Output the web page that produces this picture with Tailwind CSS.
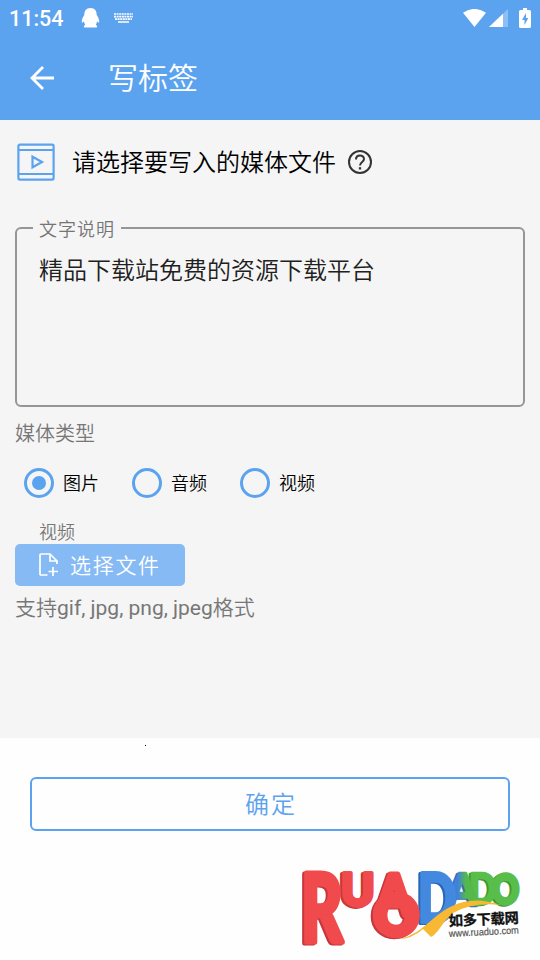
<!DOCTYPE html>
<html lang="zh-CN">
<head>
<meta charset="utf-8">
<meta name="viewport" content="width=device-width, initial-scale=1">
<title>写标签</title>
<script src="https://cdn.jsdelivr.net/npm/@tailwindcss/browser@4"></script>
</head>
<body class="bg-white font-[Roboto,'Noto_Sans_CJK_SC',sans-serif]">
<div class="flex h-[960px] w-[540px] flex-col overflow-hidden bg-[#fefefe]">
  <header class="flex h-[120px] shrink-0 flex-col bg-[#5ca3ef] text-white">
    <div class="flex h-9 items-center pl-[9px] pr-[9px]">
      <span class="w-[54px] text-[21.5px] font-medium leading-9 pt-[2px] whitespace-nowrap">11:54</span>
      <svg class="ml-[18px] h-5 w-[19px]" viewBox="0 0 19 20" fill="currentColor"><path d="M9.500 0C5 0 3.300 3 3.300 7C2 9 .6 11.500 .8 14.200C1 15 2 14.600 3 13.200C3.300 15 3.600 16 4.300 16.800C2.600 17.500 2.500 19 3.500 19.500H15.500C16.500 19 16.400 17.500 14.700 16.800C15.400 16 15.700 15 16 13.200C17 14.600 18 15 18.200 14.200C18.400 11.500 17 9 15.700 7C15.700 3 14 0 9.500 0Z"/></svg>
      <svg class="ml-[14px] h-[11px] w-[19px]" viewBox="0 0 19 11" fill="none" stroke="currentColor"><path d="M0 1H19M0 3.600H19M1 6.200H18" stroke-width="1.700" stroke-dasharray="2 .6"/><path d="M4 9H15" stroke-width="1.500"/></svg>
      <div class="ml-auto flex items-center">
        <svg class="h-[18px] w-[23px]" viewBox="0 0 23 18" fill="currentColor"><path d="M0 3.800Q11.500-4 23 3.800L11.500 18Z"/></svg>
        <svg class="ml-[3px] h-[18px] w-[19px]" viewBox="0 0 19 18" fill="currentColor"><path d="M0 18L19 0V18Z" opacity=".3"/><path d="M0 18L14 4.700V18Z"/></svg>
        <svg class="ml-[11px] h-5 w-3" viewBox="0 0 12 20"><path d="M4 0H8V2H10.500Q12 2 12 3.500V18.500Q12 20 10.500 20H1.500Q0 20 0 18.500V3.500Q0 2 1.500 2H4Z" fill="currentColor"/><path d="M7 5L3 12H5.500V17L9.300 10H7Z" fill="#5ca3ef"/></svg>
      </div>
    </div>
    <div class="flex h-[84px] items-center pl-[30px]">
      <svg class="h-6 w-6" viewBox="0 0 24 24" fill="none" stroke="currentColor" stroke-width="2.800"><path d="M24 12H2M13 1L2 12L13 23"/></svg>
      <h1 class="ml-[54px] pt-[2px] text-[30px] font-[350] leading-[44px]">写标签</h1>
    </div>
  </header>

  <main class="flex h-[618px] shrink-0 flex-col bg-[#f5f5f5] px-[15px] font-[350]">
    <div class="flex h-[84px] items-center pl-[2px]">
      <svg class="h-[38px] w-[38px]" viewBox="0 0 38 38" fill="none" stroke="#5ca3ef" stroke-width="2.200"><rect x="1.400" y="1.600" width="35.200" height="35" rx="1.500"/><path d="M2 7H36M2 31H36M15.500 13.700V24.300L25 19Z"/></svg>
      <h2 class="ml-[17px] pt-[2px] text-[24px] font-[350] leading-9 text-black">请选择要写入的媒体文件</h2>
      <svg class="ml-3 h-6 w-6" viewBox="0 0 24 24" fill="none" stroke="#333"><circle cx="12" cy="12" r="11" stroke-width="2"/><path d="M8 9.500C8 4.300 16 4.400 16 9C16 12 12 12 12 15.500" stroke-width="2"/><path d="M12 17.200V19.500" stroke-width="2.300"/></svg>
    </div>
    <fieldset class="mt-[9px] h-[194px] rounded-[6px] border-2 border-[#969696] px-4">
      <legend class="ml-0 h-[30px] px-[6px] pt-px text-[18px] leading-[31px] tracking-[1px] text-[#757575]">文字说明</legend>
      <p class="ml-[6px] mt-[10px] text-[24px] leading-9 text-[#202020]">精品下载站免费的资源下载平台</p>
    </fieldset>
    <p class="mt-3 text-[20px] leading-[30px] text-[#777]">媒体类型</p>
    <div class="mt-[19px] flex h-[30px] items-center pl-[9px] text-[18px] leading-[30px] text-black">
      <label class="flex w-[108px] items-center gap-[9px]"><span class="flex size-[30px] items-center justify-center rounded-full border-3 border-[#5ca3ef]"><span class="size-[14px] rounded-full bg-[#5ca3ef]"></span></span><span class="pt-[2px] leading-7">图片</span></label>
      <label class="flex w-[108px] items-center gap-[9px]"><span class="size-[30px] rounded-full border-3 border-[#5ca3ef]"></span><span class="pt-[2px] leading-7">音频</span></label>
      <label class="flex w-[108px] items-center gap-[9px]"><span class="size-[30px] rounded-full border-3 border-[#5ca3ef]"></span><span class="pt-[2px] leading-7">视频</span></label>
    </div>
    <p class="mt-[20px] ml-6 h-[26px] text-[18px] leading-[30px] text-[#777]">视频</p>
    <button class="flex h-[42px] w-[170px] items-center rounded-[5px] bg-[#86baf4] pl-6 text-[21px] leading-[40px] tracking-[1.700px] text-white">
      <svg class="h-6 w-5" viewBox="0 0 20 24" fill="none" stroke="currentColor" stroke-width="1.700"><path d="M8.500 22H2Q1 22 1 21V2Q1 1 2 1H11L18 8V11M11 1V8H18M14 14V23M9.500 18.500H19"/></svg>
      <span class="ml-[11px] whitespace-nowrap pt-[2px]">选择文件</span>
    </button>
    <p class="mt-[7px] text-[21px] leading-[31px] text-[#777]">支持<span class="font-normal">gif, jpg, png, jpeg</span>格式</p>
  </main>

  <footer class="flex flex-1 flex-col">
    <span class="ml-[145px] mt-[7px] size-px bg-black"></span>
    <button class="mx-[30px] mt-[31px] h-[54px] shrink-0 rounded-[6px] border-2 border-[#5ca3ef] pl-[2px] pt-[2px] text-[24px] font-[350] leading-[48px] tracking-[1.900px] text-[#5ca3ef]">确定</button>
    <svg class="ml-[290px] mt-[24px] h-[105px] w-[250px] shrink-0" viewBox="0 0 250 105" font-family="Lato, 'Open Sans', sans-serif" font-weight="900">
      <defs>
        <linearGradient id="mix" x1="0" x2="1"><stop offset=".35" stop-color="#3f82dc"/><stop offset=".6" stop-color="#55b84d"/></linearGradient>
        <g id="red-letters">
          <text transform="translate(11 87) scale(.87 1.290)" font-size="74" stroke-width="4">R</text>
          <text transform="translate(51 51) scale(.98 1)" font-size="46" stroke-width="4">U</text>
          <text transform="translate(86 61) scale(.9 1)" font-size="57" stroke-width="5">A</text>
          <text transform="translate(84 80) scale(.98 1)" font-size="56" stroke-width="6.500">O</text>
        </g>
        <text id="blue-letter" transform="translate(128 67) scale(.75 1)" font-size="67" stroke-width="4">D</text>
        <text id="mixed-letter" transform="translate(157 50)" font-size="44">A</text>
        <g id="green-letters">
          <text transform="translate(179 49) scale(.86 1)" font-size="42">D</text>
          <text transform="translate(202 49) scale(.82 1)" font-size="41" stroke-width="3.500">O</text>
        </g>
      </defs>
      <g stroke-linejoin="round" stroke-width="2.500">
        <use href="#green-letters" x="-2" y="1" fill="#399b37" stroke="#399b37"/>
        <use href="#green-letters" fill="#59bd4a" stroke="#59bd4a"/>
        <use href="#mixed-letter" x="-2" y="1" fill="#326db9" stroke="#326db9"/>
        <use href="#mixed-letter" fill="url(#mix)" stroke="url(#mix)"/>
        <use href="#blue-letter" x="-2" y="1" fill="#2866b6" stroke="#2866b6"/>
        <use href="#blue-letter" fill="#4389df" stroke="#4389df"/>
        <path d="M108 84C137 80 145 50 180 46Q192 44 211 50Q182 47 163 58C153 66 147 80 141 82L133 74Q122 84 108 84Z" fill="#f8b831"/>
        <use href="#red-letters" x="-2" y="1" fill="#c6363a" stroke="#c6363a"/>
        <use href="#red-letters" fill="#f14a4c" stroke="#f14a4c"/>
      </g>
      <text transform="translate(159 71) rotate(-2.500)" font-family="'Noto Sans CJK SC', sans-serif" font-size="14.300" font-weight="700" textLength="70" fill="#111" stroke="#111" stroke-width=".3">如多下载网</text>
      <text transform="translate(159 82) rotate(-3)" font-family="'Liberation Sans', sans-serif" font-size="10" font-weight="400" textLength="70" lengthAdjust="spacingAndGlyphs" fill="#555" stroke="#555" stroke-width=".2">www.ruaduo.com</text>
    </svg>
  </footer>
</div>
</body>
</html>
